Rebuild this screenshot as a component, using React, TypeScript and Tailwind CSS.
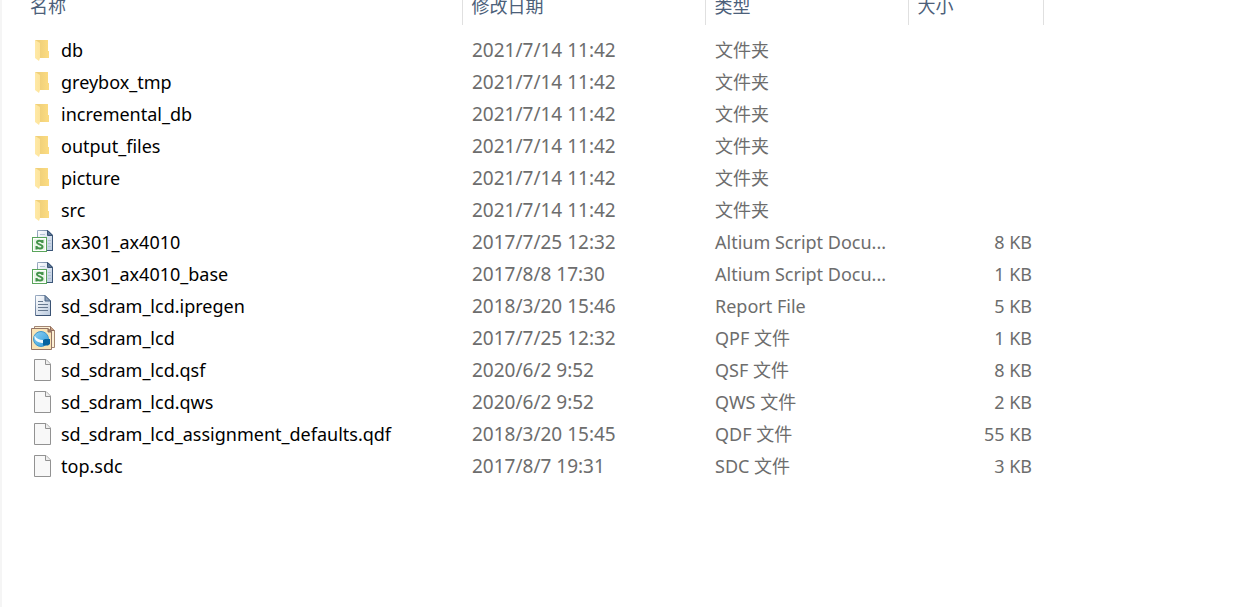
type Kind = 'folder' | 'script' | 'report' | 'project' | 'blank';

type Entry = { name: string; date: string; type: string; size?: string; kind: Kind };

const entries: Entry[] = [
  { name: 'db', date: '2021/7/14 11:42', type: '文件夹', kind: 'folder' },
  { name: 'greybox_tmp', date: '2021/7/14 11:42', type: '文件夹', kind: 'folder' },
  { name: 'incremental_db', date: '2021/7/14 11:42', type: '文件夹', kind: 'folder' },
  { name: 'output_files', date: '2021/7/14 11:42', type: '文件夹', kind: 'folder' },
  { name: 'picture', date: '2021/7/14 11:42', type: '文件夹', kind: 'folder' },
  { name: 'src', date: '2021/7/14 11:42', type: '文件夹', kind: 'folder' },
  { name: 'ax301_ax4010', date: '2017/7/25 12:32', type: 'Altium Script Docu...', size: '8 KB', kind: 'script' },
  { name: 'ax301_ax4010_base', date: '2017/8/8 17:30', type: 'Altium Script Docu...', size: '1 KB', kind: 'script' },
  { name: 'sd_sdram_lcd.ipregen', date: '2018/3/20 15:46', type: 'Report File', size: '5 KB', kind: 'report' },
  { name: 'sd_sdram_lcd', date: '2017/7/25 12:32', type: 'QPF 文件', size: '1 KB', kind: 'project' },
  { name: 'sd_sdram_lcd.qsf', date: '2020/6/2 9:52', type: 'QSF 文件', size: '8 KB', kind: 'blank' },
  { name: 'sd_sdram_lcd.qws', date: '2020/6/2 9:52', type: 'QWS 文件', size: '2 KB', kind: 'blank' },
  { name: 'sd_sdram_lcd_assignment_defaults.qdf', date: '2018/3/20 15:45', type: 'QDF 文件', size: '55 KB', kind: 'blank' },
  { name: 'top.sdc', date: '2017/8/7 19:31', type: 'SDC 文件', size: '3 KB', kind: 'blank' },
];

function Gradients() {
  return (
    <svg className="absolute size-0" aria-hidden="true">
      <defs>
        <linearGradient id="folderBack" x1="0" x2="1">
          <stop offset="0.3" stopColor="#f0d07a" />
          <stop offset="1" stopColor="#fcdc82" />
        </linearGradient>
        <linearGradient id="folderFront" x1="0" x2="1">
          <stop offset="0" stopColor="#ffe9a6" />
          <stop offset="1" stopColor="#fde49c" />
        </linearGradient>
        <linearGradient id="steel" x1="0" y1="0" x2="1" y2="1">
          <stop offset="0" stopColor="#9fb0c6" />
          <stop offset="1" stopColor="#263f66" />
        </linearGradient>
        <linearGradient id="sheet" x1="0" y1="0" x2="1" y2="1">
          <stop offset="0" stopColor="#ffffff" />
          <stop offset="1" stopColor="#b9c9de" />
        </linearGradient>
        <linearGradient id="globe" x1="0" y1="0" x2="1" y2="1">
          <stop offset="0" stopColor="#8fd0f2" />
          <stop offset="1" stopColor="#2e9bdb" />
        </linearGradient>
      </defs>
    </svg>
  );
}

function FileIcon({ kind }: { kind: Kind }) {
  return (
    <svg width="26" height="26" viewBox="0 0 26 26" className="shrink-0" aria-hidden="true">
      {kind === 'folder' && (
        <>
          <path d="M5 3H18V14H19V21H8Z" fill="url(#folderBack)" />
          <path d="M5 3L10 6V21L9 24L5 21Z" fill="url(#folderFront)" />
        </>
      )}
      {kind === 'script' && (
        <>
          <path d="M7.5 1.5H18L22.5 6V21.5H7.5Z" fill="url(#sheet)" stroke="url(#steel)" />
          <path d="M22.5 7V21.5H17" fill="none" stroke="#3b5678" />
          <path d="M17.5 1.5V6.5H22.5Z" fill="#5b7594" stroke="#3a5475" />
          <path d="M10 5.5H15M18 11.5H21M18 14.5H21M18 17.5H21" stroke="#b3c2d5" />
          <rect x="2.5" y="8.5" width="14" height="14" fill="#ffffff" stroke="#5aa55c" />
          <rect x="4" y="10" width="11" height="11" fill="#e9f5e7" />
          <path d="M12.5 11V14M12.3 13.2C11 11.4 7 11.2 7 13.5C7 15.7 12.5 15 12.5 17.7C12.5 20 8 19.9 6.7 18M6.5 17V20.5" fill="none" stroke="#43934a" strokeWidth="2" />
        </>
      )}
      {kind === 'report' && (
        <>
          <path d="M5.5 2.5H15L20.5 8V22.5H5.5Z" fill="url(#sheet)" stroke="url(#steel)" />
          <path d="M20.5 8V22.5H6" fill="none" stroke="#3a5273" />
          <path d="M15 2.5V8H20.5Z" fill="#8da1ba" stroke="#4a6484" />
          <path d="M8 8.5H13M8 11.5H18M8 14.5H18M8 17.5H18" stroke="#66788f" />
        </>
      )}
      {kind === 'project' && (
        <>
          <path d="M4.5 1.5H20.5L24.5 5.5V22.5H4.5Z" fill="#fdf1d5" stroke="#a38572" />
          <path d="M20.5 1.5V5.5H24.5" fill="#c7a083" stroke="#8e6c5d" />
          <path d="M1.5 3.5H18L21.5 7V24.5H1.5Z" fill="#fae4b6" stroke="#957567" />
          <path d="M18 3.5V7H21.5Z" fill="#a98470" stroke="#8e6c5d" />
          <circle cx="11" cy="14" r="7.5" fill="url(#globe)" stroke="#3f97cc" />
          <path d="M4.5 10.5C7 14.5 11 15.5 14 15V18C8 18 4 16 4.5 10.5Z" fill="#f3fafd" />
          <path d="M13 15L15 14H20V19L18 20.5H13Z" fill="#06639e" />
        </>
      )}
      {kind === 'blank' && (
        <>
          <path d="M4.5 2.5H16L20.5 7V23.5H4.5Z" fill="#f8f8f8" stroke="#929292" />
          <path d="M15.5 2.5V7.5H20.5" fill="#eeeeee" stroke="#929292" />
        </>
      )}
    </svg>
  );
}

export default function App() {
  return (
    <main className="min-h-screen overflow-x-hidden border-l-2 border-[#f5f5f5] bg-white font-['Noto_Sans','Noto_Sans_CJK_SC',sans-serif] text-lg text-[#6d6d6d]">
      <Gradients />
      <table className="w-full table-fixed border-collapse">
        <colgroup>
          <col className="w-[460px]" />
          <col className="w-[243px]" />
          <col className="w-[203px]" />
          <col className="w-[135px]" />
          <col />
        </colgroup>
        <thead>
          <tr className="text-left leading-3 text-[#4c607a]">
            <th scope="col" className="border-r border-[#e0e0e0] pb-[13px] pl-7 font-normal">名称</th>
            <th scope="col" className="border-r border-[#e0e0e0] pb-[13px] pl-[9px] font-normal">修改日期</th>
            <th scope="col" className="border-r border-[#e0e0e0] pb-[13px] pl-[9px] font-normal">类型</th>
            <th scope="col" className="border-r border-[#e0e0e0] pb-[13px] pl-[9px] font-normal">大小</th>
            <td />
          </tr>
        </thead>
        <tbody className="before:block before:h-[9px]">
          {entries.map((entry) => (
            <tr key={entry.name} className="h-8 whitespace-nowrap leading-8">
              <td className="p-0 pl-7">
                <div className="flex h-8 items-center gap-[5px] text-black">
                  <FileIcon kind={entry.kind} />
                  <span>{entry.name}</span>
                </div>
              </td>
              <td className="p-0 pl-[10px] text-[19px]">{entry.date}</td>
              <td className="p-0 pl-[10px]">{entry.type}</td>
              <td className="p-0 pr-[11px] text-right">{entry.size}</td>
              <td />
            </tr>
          ))}
        </tbody>
      </table>
    </main>
  );
}
